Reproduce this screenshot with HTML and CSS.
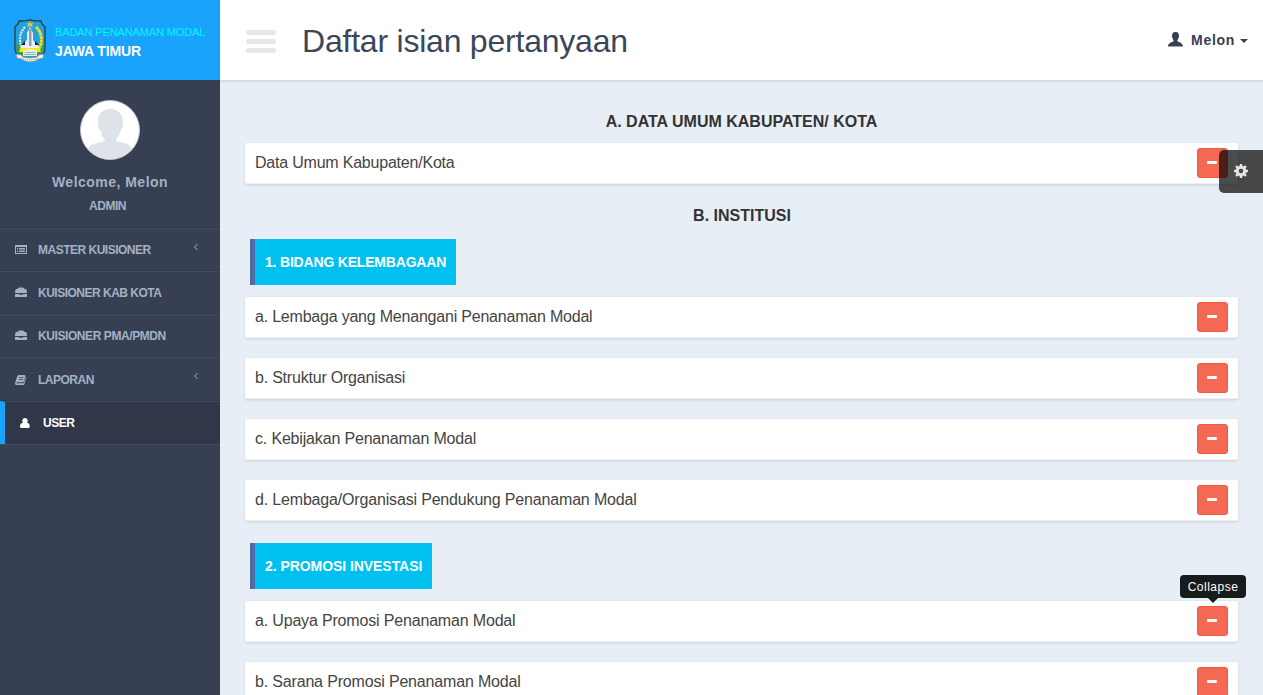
FILE: index.html
```html
<!DOCTYPE html>
<html lang="id">
<head>
<meta charset="utf-8">
<title>Daftar isian pertanyaan</title>
<link rel="stylesheet" href="styles.css">
</head>
<body>
<div class="app">
  <aside class="sidebar">
    <div class="brand">
      <svg class="crest" viewBox="0 0 32 44">
        <path d="M5 2Q11 2 16 .8 21 2 27 2L28 5 31 8V29Q31 36 25 38L16 42 7 38Q1 36 1 29V8L4 5Z" fill="#23a0df" stroke="#263d46" stroke-width="1.3"/>
        <path d="M1.800 25H30.200V30Q29 36 24 37H8Q2 35 1.800 30Z" fill="#399b62"/>
        <path d="M11 8Q6 13 6 21 6 27 10 31" fill="none" stroke="#dcefed" stroke-width="2.200" stroke-dasharray="2 .8"/>
        <path d="M22 8Q29 15 27 25 26 30 21 33" fill="none" stroke="#e9df21" stroke-width="3" stroke-dasharray="3 .5"/>
        <path d="M16 2l1 2.400 3-.3-2.200 1.900 1.200 2.400-3-1.400-3 1.400L14.200 6 12 4.100l3 .3Z" fill="#dfcd2d"/>
        <path d="M7 27h18l2 6H5Z" fill="#eee91f"/>
        <path d="M16 8l3 6V21l5 5 1 3H7l1-3 5-5V14Z" fill="#eceef4"/>
        <path d="M15 10h2.500v17H15Z" fill="#959aad"/>
        <path d="M7 26l4-4v4ZM25 26l-4-4v4Z" fill="#17232d"/>
        <path d="M9 32q7-4 14 0v5H9Z" fill="#e3f1e4"/>
        <path d="M11 33.500h10M10 35.500h12" stroke="#8dbd93"/>
        <path d="M2 35l5 1 2 2q7 2 14 0l2-2 5-1-1 4-4 1q-9 6-18 0l-4-1Z" fill="#f7f2e5" stroke="#7d878a" stroke-width=".6"/>
        <path d="M7 39q9 4 18 0" fill="none" stroke="#7b7a70" stroke-width="1" stroke-dasharray="1 1"/>
      </svg>
      <div class="brand-text">
        <div class="brand-top">BADAN PENANAMAN MODAL</div>
        <div class="brand-name">JAWA TIMUR</div>
      </div>
    </div>
    <div class="profile">
      <svg class="avatar" viewBox="0 0 60 60">
        <defs><clipPath id="disc"><circle cx="30" cy="30" r="29"/></clipPath></defs>
        <circle cx="30" cy="30" r="29.500" fill="#fff" stroke="#c4c4c6"/>
        <path clip-path="url(#disc)" fill="#dde3e9" d="M30 9C38 9 43 14 43 21 43 25 43 28 41 30 40 34 38 37 36 39 36 42 38 41 45 43 51 45 53 49 55 60H6Q7 48 11 45C17 42 24 43 25 40 22 37 21 34 21 31 18 29 18 25 18 21 18 14 22 9 30 9Z"/>
      </svg>
      <div class="welcome">Welcome, Melon</div>
      <div class="role">ADMIN</div>
    </div>
    <ul class="menu">
      <li class="item"><svg class="ico" viewBox="0 0 12 12"><path fill-rule="evenodd" d="M0 1H12V10H0ZM1 3V9H11V3ZM2 4h1v1H2ZM4 4h6v1H4ZM2 5.500h1v1H2ZM4 5.500h6v1H4ZM2 7h1v1H2ZM4 7h6v1H4Z"/></svg><span class="label">MASTER KUISIONER</span><svg class="chev" viewBox="0 0 6 8"><path d="M4.500 1L1.500 4l3 3"/></svg></li>
      <li class="item"><svg class="ico" viewBox="0 0 12 12"><path d="M1 2H2.500Q3 .5 4.500 .5h3Q9 .5 9.500 2H11Q12 3 12 6H0Q0 3 1 2ZM0 7h4v.7h4V7H12v3H0Z"/></svg><span class="label">KUISIONER KAB KOTA</span></li>
      <li class="item item-wide"><svg class="ico" viewBox="0 0 12 12"><path d="M1 2H2.500Q3 .5 4.500 .5h3Q9 .5 9.500 2H11Q12 3 12 6H0Q0 3 1 2ZM0 7h4v.7h4V7H12v3H0Z"/></svg><span class="label">KUISIONER PMA/PMDN</span></li>
      <li class="item item-tall"><svg class="ico" viewBox="0 0 12 12"><path fill-rule="evenodd" d="M3.800 1h5.900q.8 0 .6.800L8.800 7.500q-.2.700-1 .7H2q-.8 0-.8.500t.8.500h6.300q.5 0 .7-.6l1.600-6q.8.200.5 1L9.400 10.200q-.2.800-1.100.800H1.500Q-.3 11 .1 9L2 3Q2.500 1 3.800 1ZM4.200 3l-.2.800h4.500l.2-.8ZM3.700 4.900l-.2.800H8l.2-.8Z"/></svg><span class="label">LAPORAN</span><svg class="chev" viewBox="0 0 6 8"><path d="M4.500 1L1.500 4l3 3"/></svg></li>
      <li class="item item-active"><svg class="ico" viewBox="0 0 12 12"><path d="M6 1a2.700 2.700 0 0 1 1.900 4.700Q10.700 5.700 10.700 9.500q0 1.500-1.300 1.500H2.300Q1 11 1 9.500 1 5.700 4.100 5.700A2.700 2.700 0 0 1 6 1Z"/></svg><span class="label">USER</span></li>
    </ul>
  </aside>
  <div class="page">
    <header class="topbar">
      <div class="burger"><i></i><i></i><i></i></div>
      <h1 class="title">Daftar isian pertanyaan</h1>
      <div class="account">
        <svg class="account-ico" viewBox="0 0 14 14"><path d="M7 0C9.500 0 10.300 1.500 10.200 3.600 10.500 4.300 10.200 5 9.800 5.300 9.500 7 8.800 7.500 8.700 8.200 8.700 9.700 14 9.500 14 13.500H0C0 9.500 5.300 9.700 5.300 8.200 5.200 7.500 4.500 7 4.200 5.300 3.800 5 3.500 4.300 3.800 3.600 3.700 1.500 4.500 0 7 0Z"/></svg>
        <span class="account-name">Melon</span><span class="caret"></span>
      </div>
    </header>
    <main class="content">
      <h2 class="heading">A. DATA UMUM KABUPATEN/ KOTA</h2>
      <div class="card">Data Umum Kabupaten/Kota<span class="btn"></span></div>
      <h2 class="heading heading-next">B. INSTITUSI</h2>
      <div class="tag tag-first">1. BIDANG KELEMBAGAAN</div>
      <div class="card">a. Lembaga yang Menangani Penanaman Modal<span class="btn"></span></div>
      <div class="card">b. Struktur Organisasi<span class="btn"></span></div>
      <div class="card card-loose">c. Kebijakan Penanaman Modal<span class="btn"></span></div>
      <div class="card card-loose">d. Lembaga/Organisasi Pendukung Penanaman Modal<span class="btn"></span></div>
      <div class="tag tag-second">2. PROMOSI INVESTASI</div>
      <div class="card card-loose">a. Upaya Promosi Penanaman Modal<span class="btn"><span class="tip">Collapse</span></span></div>
      <div class="card card-loose">b. Sarana Promosi Penanaman Modal<span class="btn"></span></div>
    </main>
  </div>
  <div class="settings">
    <svg class="gear" viewBox="0 0 14 14"><path fill-rule="evenodd" d="M5.900 0h2.200l.4 1.900 1.100.5L11.200 1.300l1.500 1.500-1.100 1.600.5 1.100 1.900.4v2.200l-1.900.4-.5 1.100 1.100 1.600-1.500 1.500-1.600-1.100-1.100.5-.4 1.900H5.900l-.4-1.900-1.100-.5-1.600 1.100-1.500-1.500 1.100-1.600-.5-1.100L0 8.100V5.900l1.900-.4.5-1.100L1.300 2.800l1.500-1.500 1.600 1.100 1.100-.5ZM7 4.700a2.300 2.300 0 1 0 0 4.600 2.300 2.300 0 0 0 0-4.600Z"/></svg>
  </div>
</div>
</body>
</html>
```
FILE: styles.css
```css
* { box-sizing: border-box; }
body {
  margin: 0;
  font-family: "Liberation Sans", Arial, sans-serif;
  background: #e7eef5;
}
.app {
  display: flex;
  position: relative;
  height: 695px;
  overflow: hidden;
}

/* Sidebar */
.sidebar { flex: none; width: 220px; background: #364052; }
.brand {
  display: flex;
  height: 80px;
  padding: 19px 0 0 14px;
  background: #19a3fd;
}
.crest { width: 32px; height: 44px; }
.brand-text { padding: 6px 0 0 9px; white-space: nowrap; }
.brand-top { font-size: 11px; line-height: 14px; letter-spacing: -.12px; color: #00f6ff; }
.brand-name {
  margin-top: 4px;
  font-size: 14px;
  font-weight: bold;
  line-height: 16px;
  letter-spacing: -.15px;
  color: #fff;
}
.profile {
  display: flex;
  flex-direction: column;
  align-items: center;
  height: 148px;
  padding-top: 20px;
  border-bottom: 1px solid #2f394a;
  color: #a3b0c5;
  font-weight: bold;
}
.avatar { width: 60px; height: 60px; }
.welcome { margin-top: 14px; font-size: 14px; line-height: 16px; letter-spacing: .48px; }
.role { margin: 8px 5px 0 0; font-size: 12px; line-height: 16px; letter-spacing: -.5px; }
.menu { margin: 0; padding: 0; list-style: none; border-bottom: 1px solid #414c60; }
.item {
  display: flex;
  align-items: center;
  height: 43px;
  padding: 0 21px 0 15px;
  border-top: 1px solid #414c60;
  border-bottom: 1px solid #2f394a;
  color: #a3b0c5;
  font-size: 12px;
  font-weight: bold;
  letter-spacing: -.5px;
}
.item-wide { letter-spacing: -.42px; }
.item-tall { height: 44px; padding-top: 1px; }
.item-active {
  padding-left: 14px;
  border-left: 5px solid #19a3fd;
  border-bottom: 0;
  background: #2f3748;
  color: #fff;
}
.ico { width: 12px; height: 12px; fill: currentColor; }
.label { margin-left: 11px; }
.item-active .label { margin-left: 12px; }
.chev {
  width: 6px;
  height: 8px;
  margin: -5px 0 0 auto;
  fill: none;
  stroke: #a3b0c5;
}
.item-tall .chev { margin-top: -7px; }

/* Top bar */
.page { flex: 1; min-width: 0; }
.topbar {
  display: flex;
  align-items: center;
  position: relative;
  height: 80px;
  padding: 0 15px 0 26px;
  background: #fff;
  box-shadow: 0 1px 3px rgba(0, 0, 0, .15);
}
.burger { display: grid; gap: 4px; width: 30px; padding-top: 3px; }
.burger i { height: 5px; border-radius: 2.5px; background: #e6e7e9; }
.title {
  margin: 1px 0 0 26px;
  font-size: 32px;
  font-weight: normal;
  line-height: 38px;
  letter-spacing: -.22px;
  color: #3b465a;
}
.account { display: flex; align-items: center; margin-left: auto; color: #364052; }
.account-ico { width: 15px; height: 15px; margin-top: -2px; fill: currentColor; }
.account-name { margin-left: 8px; font-size: 14px; font-weight: bold; letter-spacing: .7px; }
.caret {
  margin: 2px 0 0 5px;
  border: 4px solid transparent;
  border-width: 4px 4.5px 0;
  border-top-color: currentColor;
}

/* Content */
.content { padding: 32px 25px 0; color: #333; }
.heading { margin: 0 0 11px; font-size: 16px; line-height: 20px; text-align: center; }
.heading-next { margin: 0 0 13px; padding: 2px 0 0 1px; }
.card {
  display: flex;
  justify-content: space-between;
  height: 41px;
  margin-bottom: 20px;
  padding: 5px 10px;
  border-bottom: 1px solid #eef0f1;
  border-radius: 2px;
  background: #fff;
  box-shadow: 0 1px 3px rgba(0, 0, 0, .12);
  font-size: 16px;
  line-height: 30px;
  letter-spacing: -.21px;
  color: #444;
}
.card-loose { letter-spacing: -.17px; }
.btn {
  display: grid;
  place-items: center;
  position: relative;
  width: 31px;
  height: 30px;
  padding: 0 1px 2px 0;
  border: 1px solid #f05a43;
  border-radius: 3px;
  background: #f56954;
}
.btn::before { content: ""; width: 10px; height: 3px; border-radius: 1px; background: #fff; }
.tag {
  width: max-content;
  height: 46px;
  margin: 0 0 12px 5px;
  padding: 0 10px;
  border-left: 5px solid #4c6ba8;
  background: #00c0ef;
  color: #fff;
  font-size: 14px;
  font-weight: bold;
  line-height: 46px;
}
.tag-first { letter-spacing: -.19px; }
.tag-second { margin-top: 22px; letter-spacing: -.06px; }
.tip {
  position: absolute;
  left: -18px;
  top: -32px;
  width: 66px;
  height: 23px;
  border-radius: 4px;
  background: #161b1b;
  color: #fff;
  font-size: 12px;
  line-height: 24px;
  letter-spacing: .5px;
  text-align: center;
}
.tip::after {
  content: "";
  position: absolute;
  left: 28px;
  top: 23px;
  border: 5px solid transparent;
  border-top-color: #161b1b;
  border-bottom: 0;
}
.settings {
  display: grid;
  place-items: center;
  position: absolute;
  right: 0;
  top: 150px;
  width: 44px;
  height: 43px;
  padding-bottom: 1px;
  border-radius: 5px 0 0 5px;
  background: rgba(0, 0, 0, .7);
}
.gear { width: 14px; height: 14px; fill: #e2e4e5; }
```
